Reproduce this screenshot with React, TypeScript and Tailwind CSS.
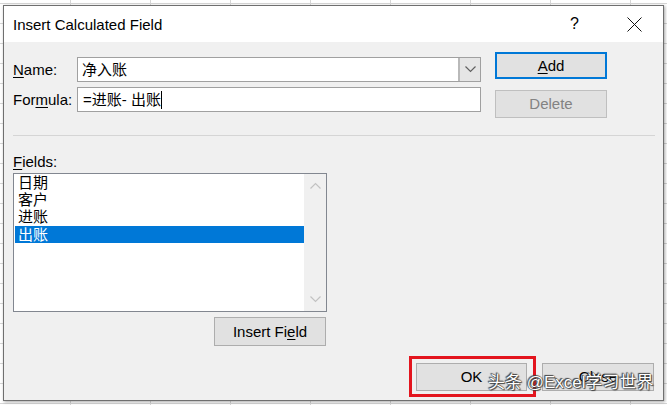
import React from "react";

const ui = "font-['Segoe_UI','Liberation_Sans','Noto_Sans_CJK_SC',sans-serif]";
const cjk = "font-['Liberation_Sans','Noto_Sans_CJK_SC',sans-serif]";

function U({ children }: { children: React.ReactNode }) {
  return <span className="underline underline-offset-2 decoration-1">{children}</span>;
}

function Chevron({ up, color }: { up?: boolean; color: string }) {
  return (
    <svg width="11" height="7" viewBox="0 0 11 7" fill="none">
      <path
        d={up ? "M0.5 6.5 L5.5 1.5 L10.5 6.5" : "M0.5 0.5 L5.5 5.5 L10.5 0.5"}
        stroke={color}
        strokeWidth="1.2"
      />
    </svg>
  );
}

export default function App() {
  const fields = ["日期", "客户", "进账", "出账"];
  return (
    <div
      className={`w-[667px] h-[405px] overflow-hidden bg-white bg-[linear-gradient(to_right,#d6d6d6_1px,transparent_1px),linear-gradient(to_bottom,#d6d6d6_1px,transparent_1px)] bg-size-[80px_20px] bg-position-[70px_3px] pl-[3px] pt-[5px] ${ui}`}
    >
      <div className="w-[661px] h-[396px] border border-[#6f6f6f] shadow-[1px_1px_3px_rgba(0,0,0,0.35)] bg-[#f0f0f0] flex flex-col text-[15px] text-black leading-[20px]">
        {/* Title bar */}
        <div className="h-[36px] bg-white flex items-center justify-between shrink-0">
          <span className="pl-[9px] pt-[1px] text-[15px]">Insert Calculated Field</span>
          <div className="flex items-center pr-[21px]">
            <span className="text-[16px] mr-[48px]">?</span>
            <svg width="15" height="15" viewBox="0 0 15 15">
              <path d="M0.5 0.5 L14.5 14.5 M14.5 0.5 L0.5 14.5" stroke="#111" strokeWidth="1" />
            </svg>
          </div>
        </div>

        {/* Body */}
        <div className="flex flex-col pl-[9px] pr-[8px]">
          {/* Top rows */}
          <div className="flex items-start">
            <div className="flex flex-col w-[468px]">
              <div className="flex items-center mt-[15px]">
                <span className="w-[64px]">
                  <U>N</U>ame:
                </span>
                <div className="w-[404px] h-[25px] border border-[#a0a0a0] bg-white flex">
                  <div className={`flex-1 pl-[4px] flex items-center ${cjk} text-[15px]`}>净入账</div>
                  <div className="w-[22px] bg-[#e5e5e5] border-l-2 border-[#b9b9b9] flex items-center justify-center">
                    <Chevron color="#606060" />
                  </div>
                </div>
              </div>
              <div className="flex items-center mt-[5px]">
                <span className="w-[64px]">
                  For<U>m</U>ula:
                </span>
                <div className="w-[404px] h-[25px] border border-[#a0a0a0] bg-white flex items-center pl-[5px]">
                  <span className={`${cjk} text-[15px]`}>=进账- 出账</span>
                  <span className="w-px h-[18px] bg-black"></span>
                </div>
              </div>
            </div>
            <div className="flex flex-col ml-[14px]">
              <div className="mt-[10px] w-[112px] h-[27px] border-2 border-[#0078d7] bg-[#e1e1e1] flex items-center justify-center">
                <span>
                  <U>A</U>dd
                </span>
              </div>
              <div className="mt-[11px] w-[112px] h-[28px] border border-[#bfbfbf] bg-[#e1e1e1] text-[#838383] flex items-center justify-center">
                Delete
              </div>
            </div>
          </div>

          {/* Separator */}
          <div className="mt-[17px] w-[642px] h-px bg-[#d5d5d5]"></div>

          {/* Fields */}
          <div className="mt-[16px] h-[20px]">
            <U>F</U>ields:
          </div>
          <div className="mt-[1px] w-[314px] h-[139px] border border-[#828790] bg-white flex pl-px">
            <div className={`w-[289px] flex flex-col ${cjk}`}>
              {fields.map((f, i) => (
                <div
                  key={f}
                  className={`h-[17px] leading-[17px] pl-[3px] text-[15px] ${
                    i === 3 ? "bg-[#0078d7] text-white mt-px" : ""
                  }`}
                >
                  {f}
                </div>
              ))}
            </div>
            <div className="w-[22px] bg-[#f0f0f0] flex flex-col items-center justify-between py-[8px]">
              <Chevron up color="#c2c2c2" />
              <Chevron color="#c2c2c2" />
            </div>
          </div>

          <div className="mt-[5px] ml-[201px] w-[112px] h-[29px] border border-[#adadad] bg-[#e1e1e1] flex items-center justify-center">
            <span>
              Insert Fi<U>e</U>ld
            </span>
          </div>

          {/* Bottom buttons */}
          <div className="mt-[17px] flex justify-end pr-[1px]">
            <div className="relative w-[111px] h-[28px] border border-[#adadad] bg-[#e1e1e1] flex items-center justify-center">
              OK
              <div className="absolute -left-[8px] -top-[8px] -right-[10px] -bottom-[7px] border-[3px] border-[#e3151e]"></div>
            </div>
            <div className="relative ml-[15px] w-[112px] h-[28px] border border-[#adadad] bg-[#e1e1e1] flex items-center justify-center">
              Close
              <div
                className={`absolute -left-[55px] top-[8px] whitespace-nowrap text-[17px] leading-[22px] text-white font-['Liberation_Sans','Noto_Sans_CJK_SC',sans-serif] [text-shadow:0_0_1px_#333,0_0_1px_#333,1px_1px_1px_#444,-1px_-1px_1px_#444]`}
              >
                头条 @Excel学习世界
              </div>
            </div>
          </div>
        </div>
      </div>
    </div>
  );
}
